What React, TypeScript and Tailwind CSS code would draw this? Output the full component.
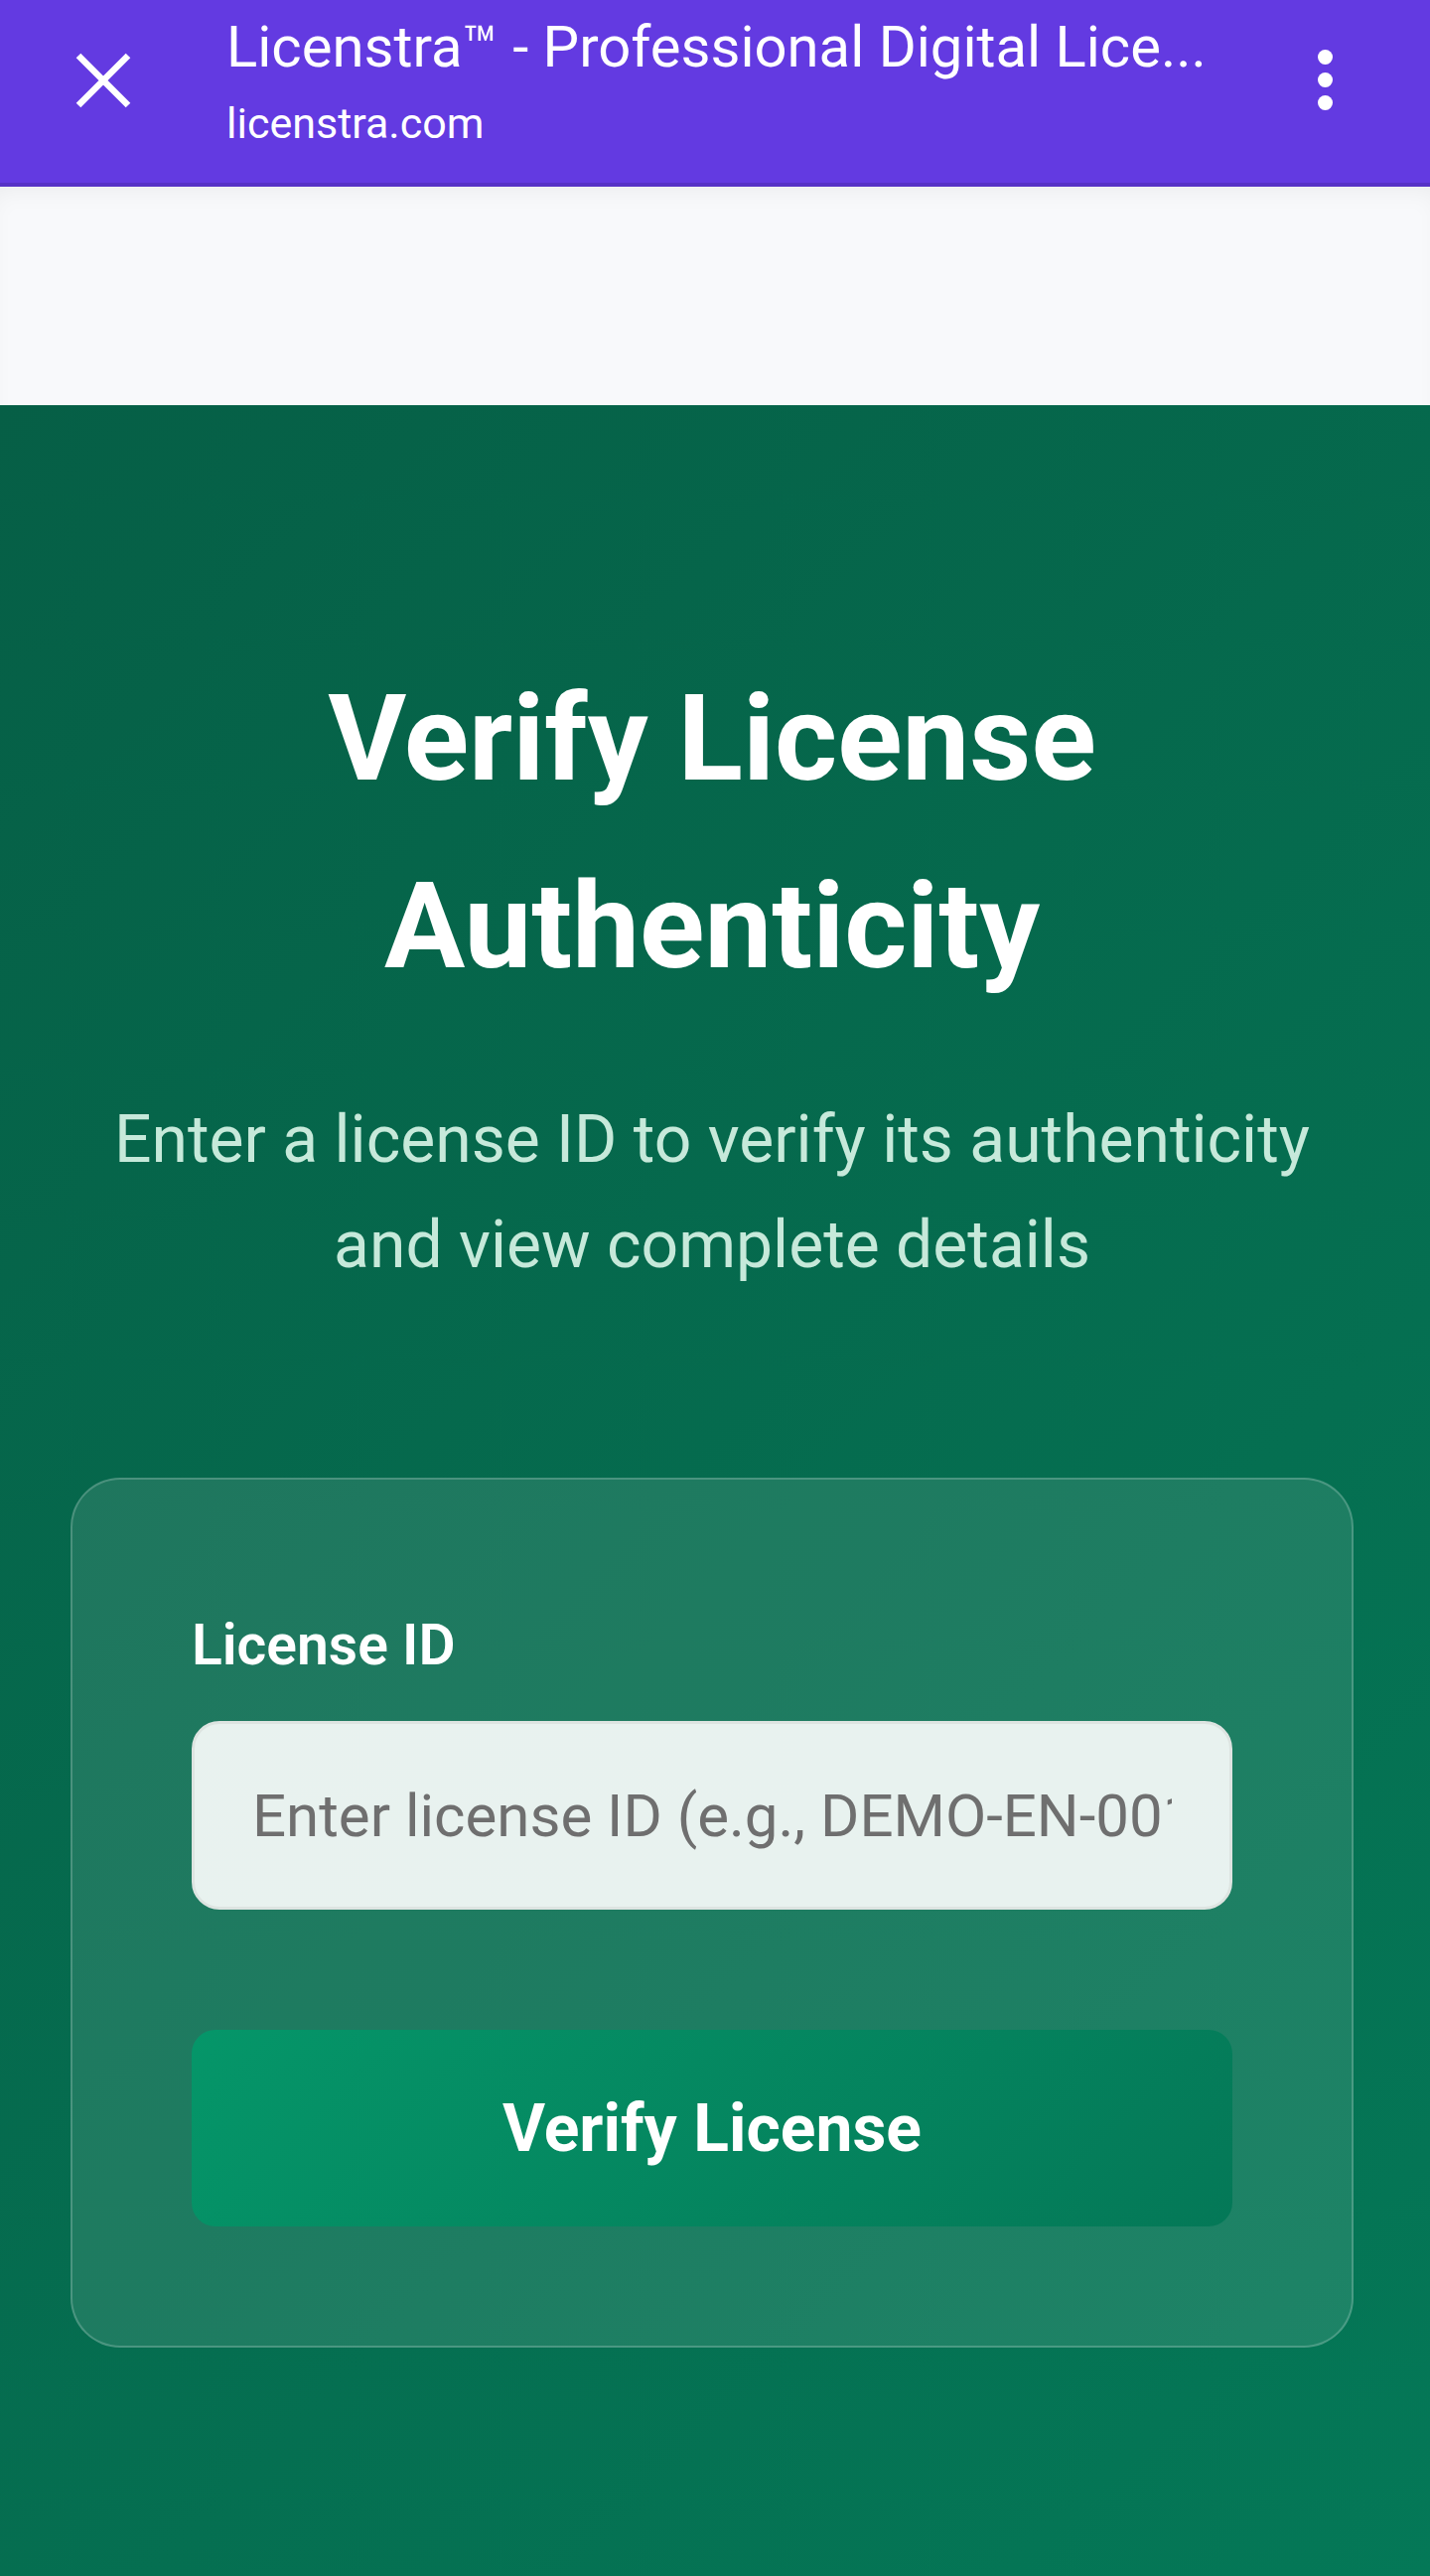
export default function App() {
  return (
    <div className="flex min-h-[2594px] flex-col font-['Roboto','Liberation_Sans',sans-serif]">
      {/* browser custom tab bar */}
      <header className="flex h-[188px] items-start border-b-[4px] border-[#5632c6] bg-[#633ae1] text-white">
        <button className="ml-[76px] mt-[53px] h-[56px] w-[56px]" aria-label="Close">
          <svg viewBox="0 0 56 56" className="h-full w-full" fill="none" stroke="white" strokeWidth="6.5" strokeLinecap="butt">
            <path d="M3 3 L53 53 M53 3 L3 53" />
          </svg>
        </button>
        <div className="ml-[96px] mt-[12px] flex-1">
          <div className="text-[58px] leading-[70px] whitespace-nowrap">Licenstra™ - Professional Digital Lice...</div>
          <div className="mt-[14px] text-[43px] leading-[56px]">licenstra.com</div>
        </div>
        <div className="mr-[98px] mt-[50px] flex flex-col gap-[8px]">
          <span className="h-[15px] w-[15px] rounded-full bg-white" />
          <span className="h-[15px] w-[15px] rounded-full bg-white" />
          <span className="h-[15px] w-[15px] rounded-full bg-white" />
        </div>
      </header>

      <div className="h-[220px] bg-[#f8f9fb] shadow-[inset_0_14px_28px_-14px_rgba(0,0,0,0.07)]" />

      <section className="flex-1 bg-linear-135 from-[#065f46] to-[#047857] pl-[71px] pr-[77px] pt-[242px]">
        <h1 className="text-center text-[121px] leading-[189px] font-bold text-white">
          Verify License Authenticity
        </h1>
        <p className="mx-auto mt-[67px] max-w-[1260px] text-center text-[66px] leading-[105.6px] text-[#c6e9da]">
          Enter a license ID to verify its authenticity and view complete details
        </p>

        <div className="mt-[182px] rounded-[50px] border-2 border-white/20 bg-white/10 p-[120px]">
          <label className="block text-[57px] leading-[94px] font-semibold text-white">License ID</label>
          <input
            type="text"
            placeholder="Enter license ID (e.g., DEMO-EN-001)"
            className="mt-[29px] h-[190px] w-full rounded-[28px] border-[3px] border-[#dde4e1] bg-white/90 px-[58px] text-[60px] text-gray-800 outline-none placeholder:text-[#6f6f6f]"
          />
          <button className="mt-[121px] h-[198px] w-full rounded-[24px] bg-linear-135 from-[#059669] to-[#047857] text-[66px] font-bold text-white">
            Verify License
          </button>
        </div>
      </section>
    </div>
  )
}
